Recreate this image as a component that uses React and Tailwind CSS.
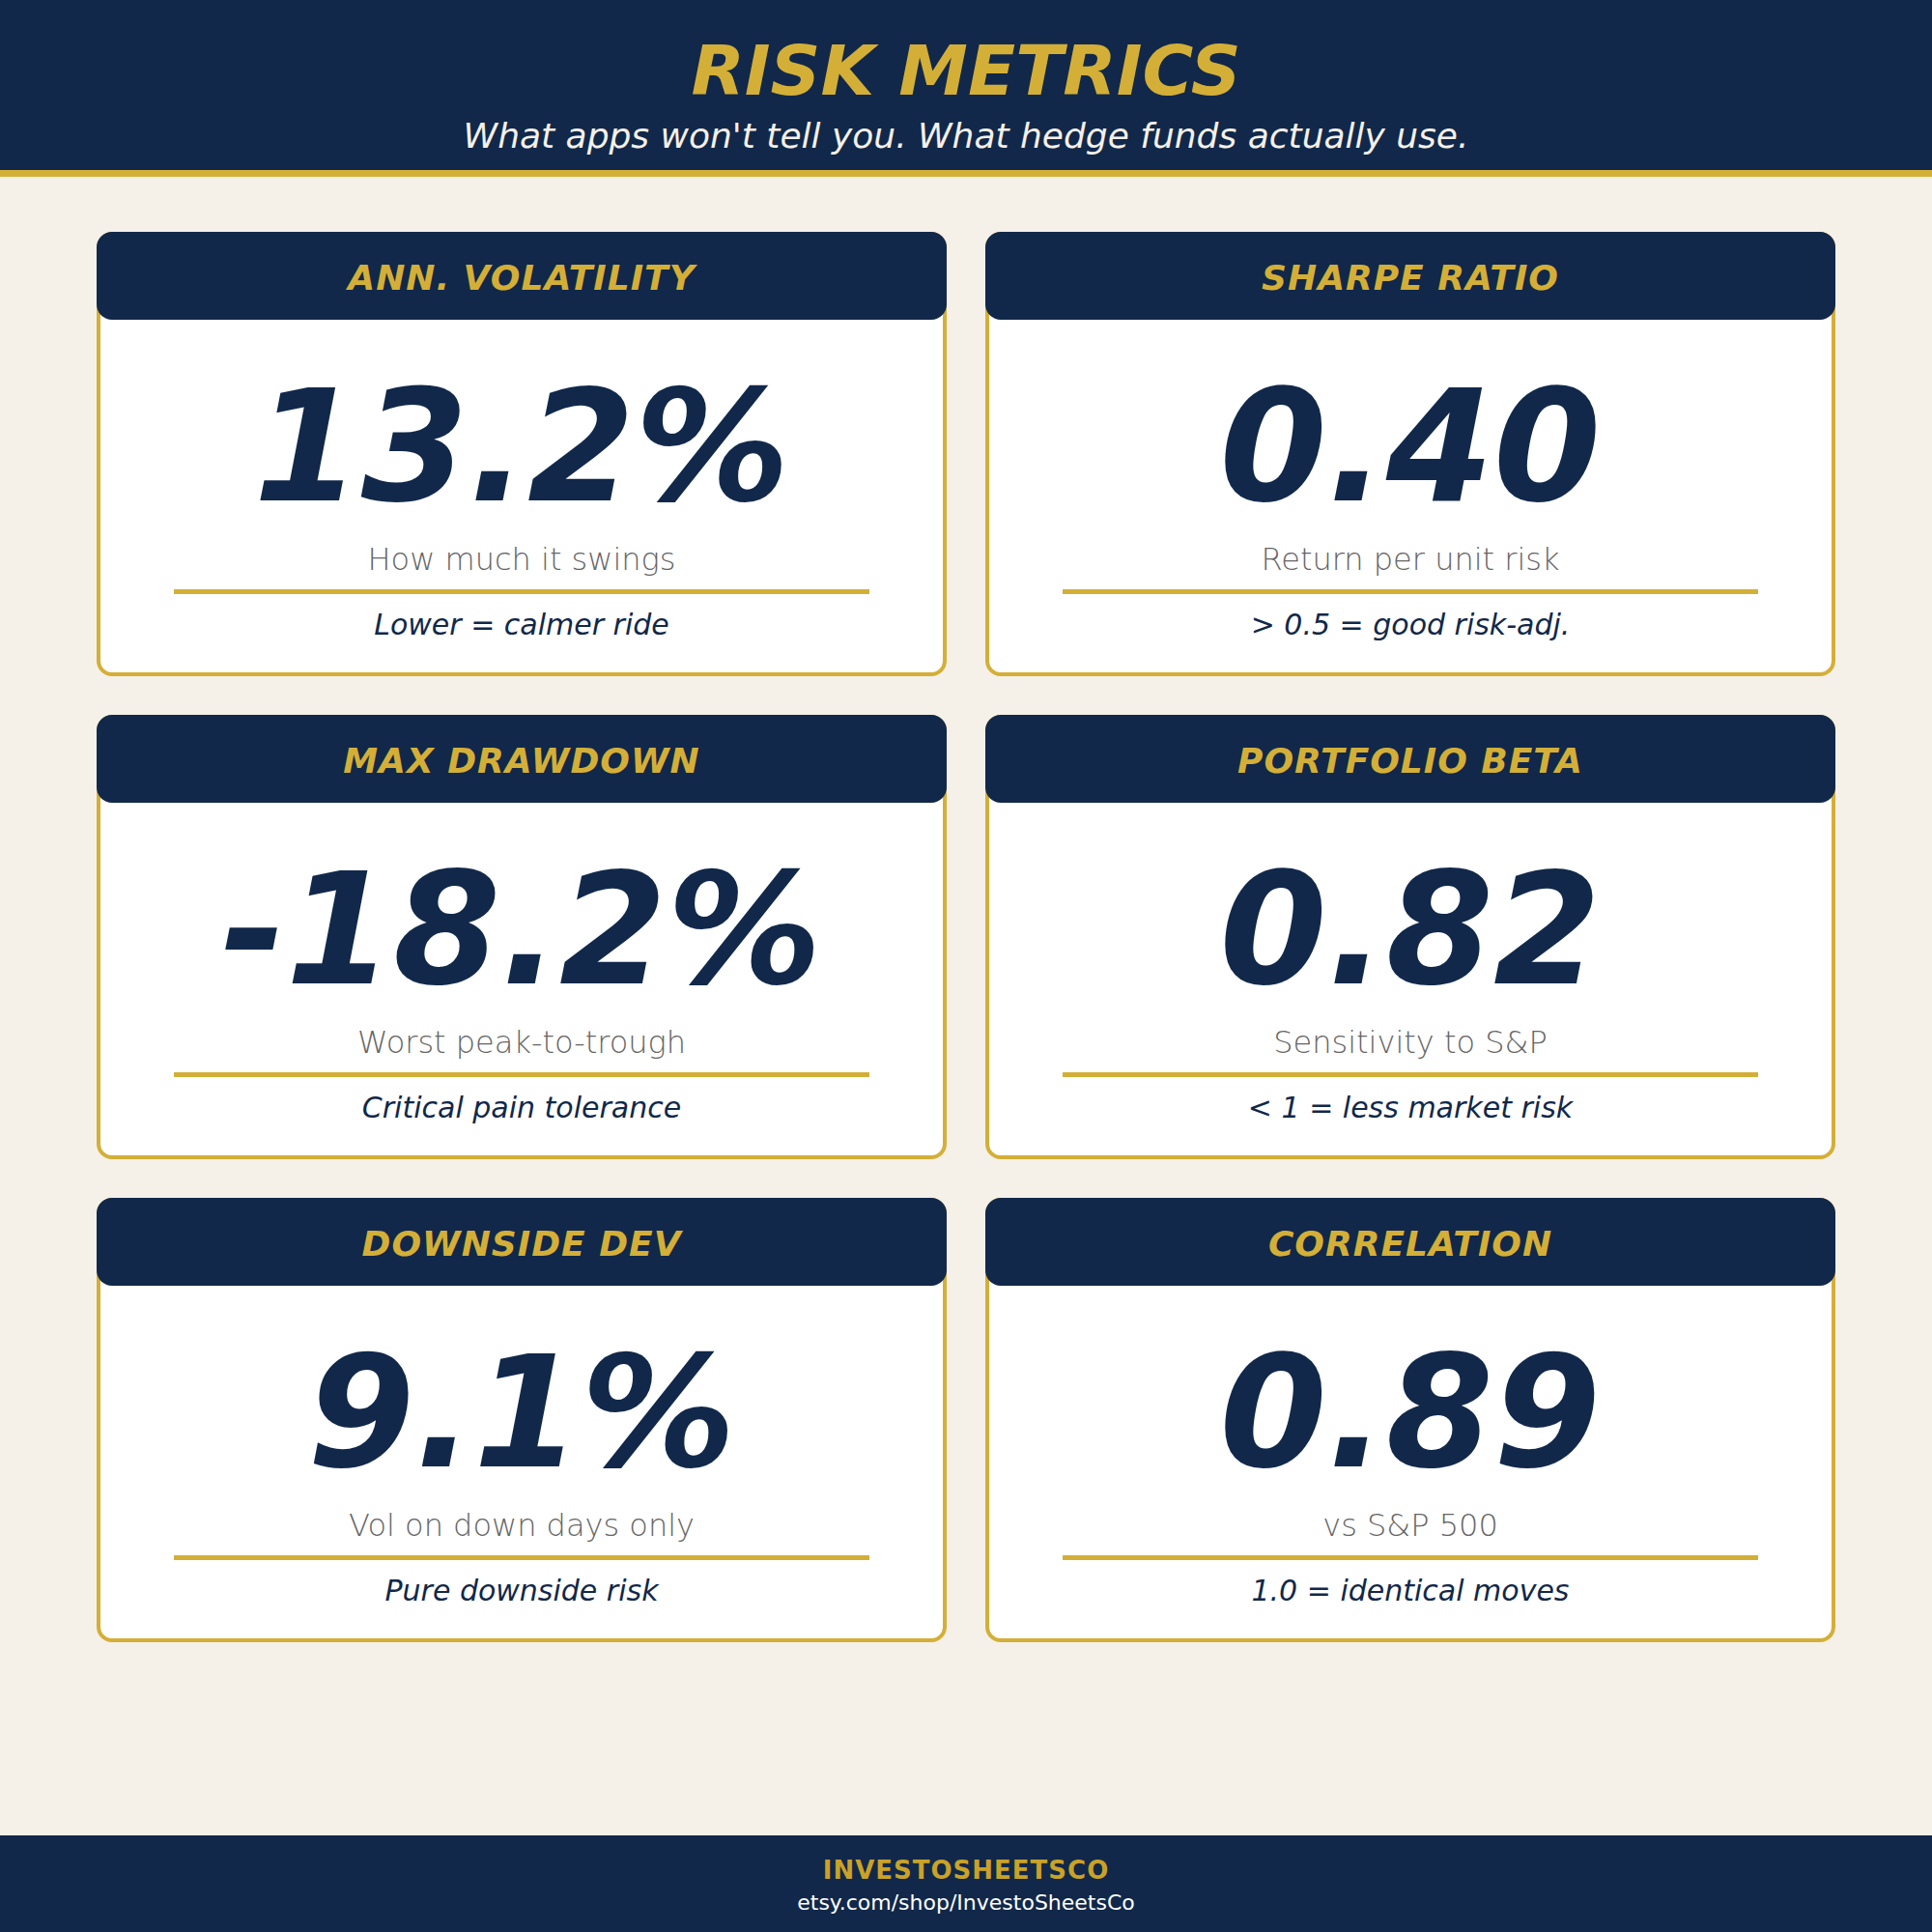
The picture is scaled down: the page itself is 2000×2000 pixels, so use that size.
import React from "react";

const cards = [
  { title: "ANN. VOLATILITY", value: "13.2%", desc: "How much it swings", note: "Lower = calmer ride" },
  { title: "SHARPE RATIO", value: "0.40", desc: "Return per unit risk", note: "> 0.5 = good risk-adj." },
  { title: "MAX DRAWDOWN", value: "-18.2%", desc: "Worst peak-to-trough", note: "Critical pain tolerance" },
  { title: "PORTFOLIO BETA", value: "0.82", desc: "Sensitivity to S&P", note: "< 1 = less market risk" },
  { title: "DOWNSIDE DEV", value: "9.1%", desc: "Vol on down days only", note: "Pure downside risk" },
  { title: "CORRELATION", value: "0.89", desc: "vs S&P 500", note: "1.0 = identical moves" },
];

function Card({ title, value, desc, note }) {
  return (
    <div className="h-[460px] bg-white border-[4px] border-[#d4af37] rounded-[16px] flex flex-col items-center">
      <div className="self-stretch -mx-[4px] -mt-[4px] h-[91px] rounded-[16px] bg-[#11284a] pt-[30px] text-center">
        <div className="text-[36px] leading-[36px] font-bold italic tracking-[1px] text-[#d4af37] whitespace-nowrap">
          {title}
        </div>
      </div>
      <div className="mt-[52px] text-[160px] leading-[160px] font-bold italic text-[#11284a] whitespace-nowrap">
        {value}
      </div>
      <div className="mt-[20px] text-[32px] leading-[32px] font-extralight text-[#666666] whitespace-nowrap">
        {desc}
      </div>
      <div className="mt-[15px] w-[720px] h-[5px] bg-[#d4af37]" />
      <div className="mt-[17px] text-[30px] leading-[30px] italic text-[#11284a] whitespace-nowrap">
        {note}
      </div>
    </div>
  );
}

export default function App() {
  return (
    <div className="w-[2000px] h-[2000px] bg-[#f5f0e8] flex flex-col font-['DejaVu_Sans',sans-serif]">
      <header className="h-[183px] shrink-0 bg-[#11284a] border-b-[7px] border-[#d4af37] flex flex-col items-center pt-[37px]">
        <h1 className="text-[72px] leading-[72px] font-bold italic text-[#d4af37] whitespace-nowrap">
          RISK METRICS
        </h1>
        <p className="mt-[14px] text-[36px] leading-[36px] italic text-[#f5f0e8] whitespace-nowrap">
          What apps won't tell you. What hedge funds actually use.
        </p>
      </header>
      <main className="flex-1 px-[100px] pt-[57px]">
        <div className="grid grid-cols-2 gap-[40px]">
          {cards.map((c) => (
            <Card key={c.title} {...c} />
          ))}
        </div>
      </main>
      <footer className="h-[100px] shrink-0 bg-[#11284a] flex flex-col items-center pt-[23px]">
        <div className="text-[26px] leading-[26px] font-bold tracking-[1px] text-[#c9a227] whitespace-nowrap">
          INVESTOSHEETSCO
        </div>
        <div className="mt-[10px] text-[22px] leading-[22px] text-white whitespace-nowrap">
          etsy.com/shop/InvestoSheetsCo
        </div>
      </footer>
    </div>
  );
}
